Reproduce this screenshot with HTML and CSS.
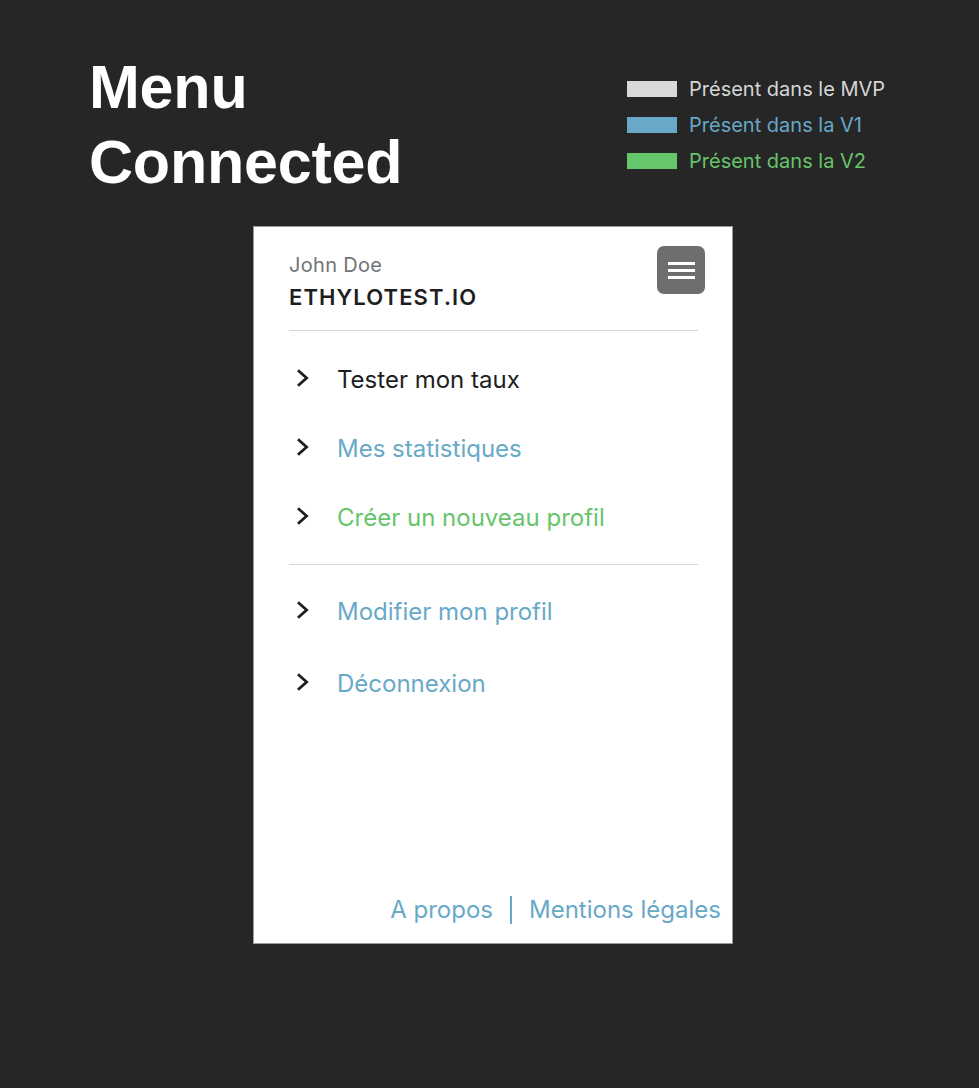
FILE: index.html
```html
<!DOCTYPE html>
<html lang="fr">
<head>
<meta charset="utf-8">
<title>Menu Connected</title>
<link rel="stylesheet" href="styles.css">
</head>
<body>
<header class="top">
  <h1 class="title">Menu<br>Connected</h1>
  <ul class="legend">
    <li class="legend-row mvp"><span class="swatch"></span>Présent dans le MVP</li>
    <li class="legend-row v1"><span class="swatch"></span>Présent dans la V1</li>
    <li class="legend-row v2"><span class="swatch"></span>Présent dans la V2</li>
  </ul>
</header>
<main class="card">
  <div class="card-head">
    <div class="who">
      <div class="name">John Doe</div>
      <div class="brand">ETHYLOTEST.IO</div>
    </div>
    <button class="burger" aria-label="Menu"><span></span><span></span><span></span></button>
  </div>
  <hr class="sep">
  <ul class="group g1">
    <li class="item c-mvp"><svg class="chev" viewBox="0 0 12 18" width="12" height="18"><polyline points="2,2.2 9.6,9 2,15.8"/></svg>Tester mon taux</li>
    <li class="item c-v1"><svg class="chev" viewBox="0 0 12 18" width="12" height="18"><polyline points="2,2.2 9.6,9 2,15.8"/></svg>Mes statistiques</li>
    <li class="item c-v2"><svg class="chev" viewBox="0 0 12 18" width="12" height="18"><polyline points="2,2.2 9.6,9 2,15.8"/></svg>Créer un nouveau profil</li>
  </ul>
  <hr class="sep sep2">
  <ul class="group g2">
    <li class="item c-v1"><svg class="chev" viewBox="0 0 12 18" width="12" height="18"><polyline points="2,2.2 9.6,9 2,15.8"/></svg>Modifier mon profil</li>
    <li class="item c-v1"><svg class="chev" viewBox="0 0 12 18" width="12" height="18"><polyline points="2,2.2 9.6,9 2,15.8"/></svg>Déconnexion</li>
  </ul>
  <footer class="foot">
    <span>A propos</span><span class="bar"></span><span>Mentions légales</span>
  </footer>
</main>
</body>
</html>
```

FILE: styles.css
```css
* { box-sizing: border-box; }
html, body { margin: 0; padding: 0; }
body {
  background: #262626;
  width: 979px;
  height: 1088px;
  overflow: hidden;
  font-family: Inter, "Noto Sans", sans-serif;
}
.top {
  display: flex;
  padding: 50px 0 0 89px;
  height: 226px;
}
.title {
  flex: 0 0 538px;
  margin: 0;
  font-family: "Liberation Sans", Arial, sans-serif;
  font-weight: 700;
  font-size: 61px;
  line-height: 75px;
  color: #fff;
  letter-spacing: -0.2px;
}
.legend {
  list-style: none;
  margin: 0;
  padding: 27px 0 0 0;
  display: flex;
  flex-direction: column;
  gap: 12px;
}
.legend-row {
  display: flex;
  align-items: center;
  gap: 12px;
  font-size: 20px;
  line-height: 24px;
  height: 24px;
}
.swatch { width: 50px; height: 16px; display: block; }
.mvp { color: #d6d6d6; }
.mvp .swatch { background: #d9d9d9; }
.v1 { color: #67a8c7; }
.v1 .swatch { background: #68a9c8; }
.v2 { color: #66c46a; }
.v2 .swatch { background: #66c66b; }

.card {
  margin-left: 253px;
  width: 480px;
  height: 718px;
  background: #fff;
  border: 1px solid #9a9a9a;
  display: flex;
  flex-direction: column;
}
.card-head {
  display: flex;
  justify-content: space-between;
  align-items: flex-start;
  padding: 19px 27px 0 35px;
}
.who { padding-top: 7px; }
.name { font-size: 20px; line-height: 24px; color: #737373; letter-spacing: 0.3px; }
.brand { margin-top: 8px; font-size: 22px; line-height: 24px; font-weight: 600; color: #1e1e1e; letter-spacing: 1.1px; }
.burger {
  width: 48px; height: 48px;
  border: 0; border-radius: 7px;
  background: #6e6e6e;
  display: flex; flex-direction: column; align-items: center; justify-content: center;
  gap: 4px; padding: 0;
}
.burger span { display: block; width: 27px; height: 3px; background: #fff; }
.sep {
  margin: 21px 34px 0 35px;
  border: 0;
  height: 1px;
  background: #d6d6d6;
}
.group { list-style: none; margin: 0; padding: 0; }
.g1 { padding-top: 14px; }
.g1 .item { height: 69px; }
.sep2 { margin-top: 12px; }
.g2 { padding-top: 10px; }
.g2 .item { height: 72px; }
.item {
  display: flex;
  align-items: center;
  padding-left: 43px;
  font-size: 24px;
  gap: 28px;
}
.chev { flex: none; margin-top: -3px; }
.chev polyline { fill: none; stroke: #1e1e1e; stroke-width: 2.8; stroke-linecap: square; stroke-linejoin: miter; }
.c-mvp { color: #1e1e1e; }
.c-v1 { color: #68a9c8; }
.c-v2 { color: #66c46a; }
.foot {
  margin-top: auto;
  display: flex;
  justify-content: flex-end;
  align-items: center;
  gap: 17px;
  padding: 0 11px 18px 0;
  font-size: 24px;
  line-height: 30px;
  color: #68a9c8;
}
.foot .bar { width: 2px; height: 28px; background: #68a9c8; }
```
